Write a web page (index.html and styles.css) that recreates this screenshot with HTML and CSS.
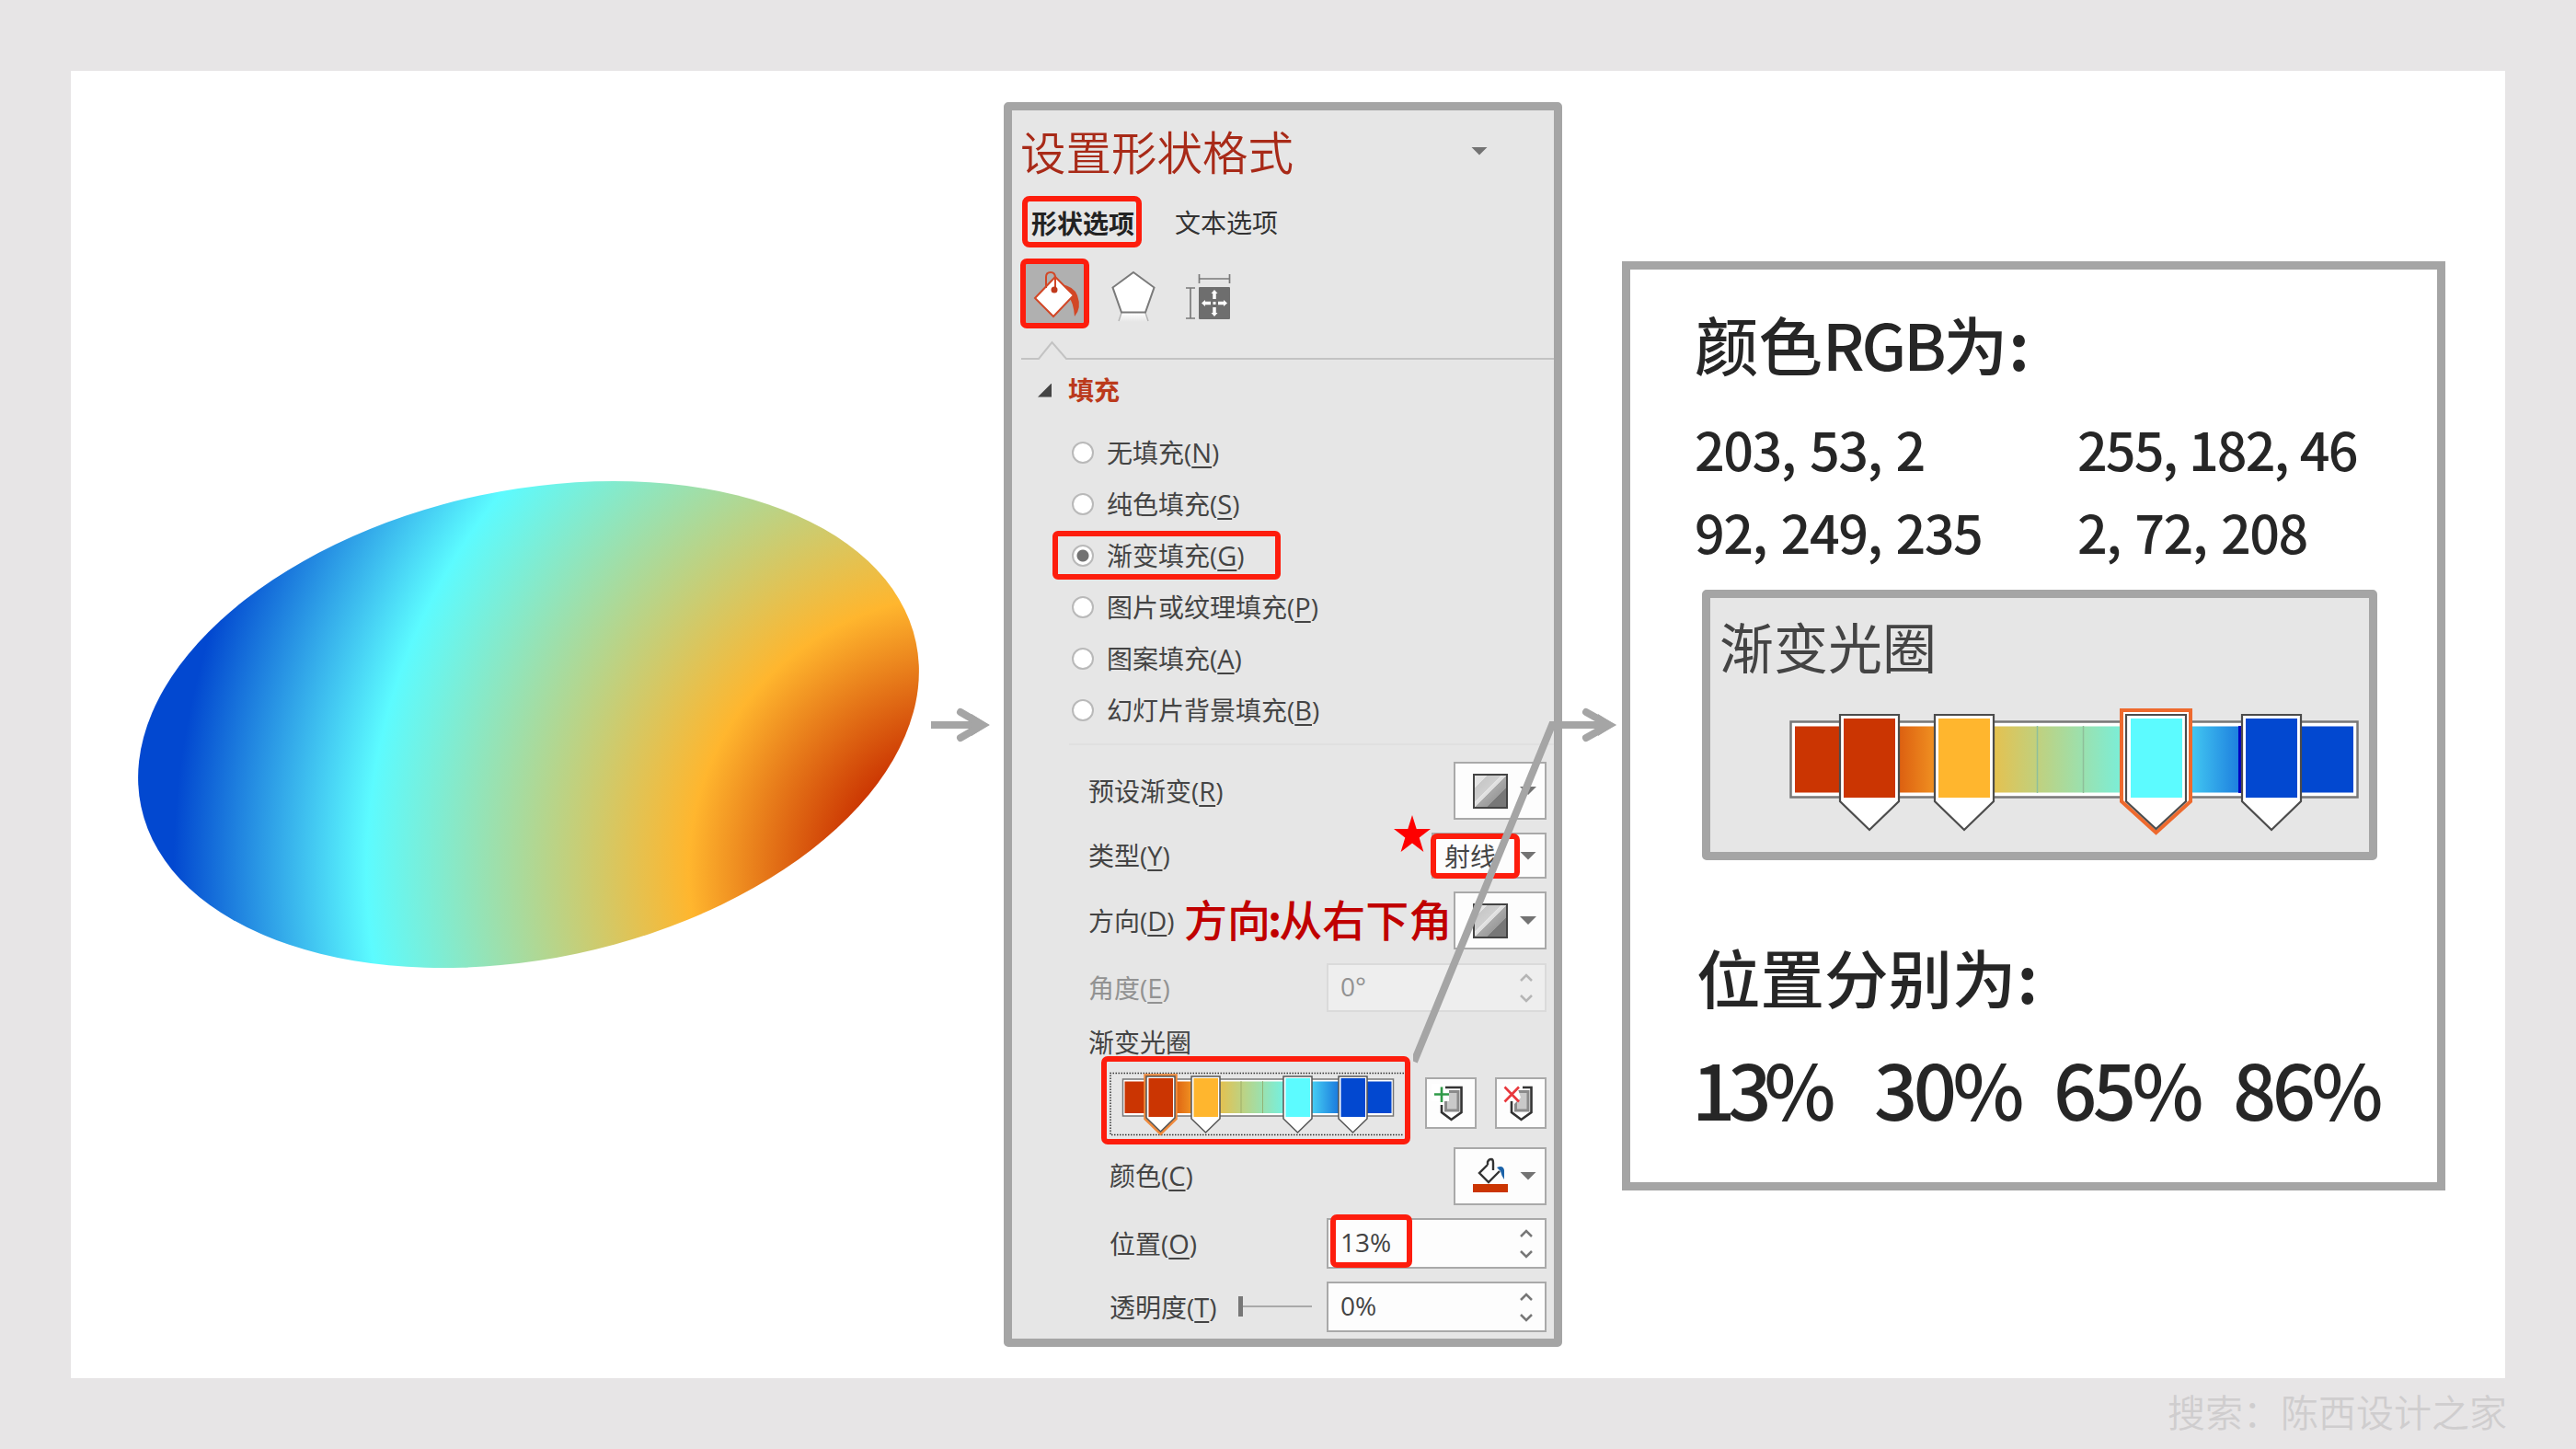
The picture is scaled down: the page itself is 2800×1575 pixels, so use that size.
FILE: index.html
```html
<!DOCTYPE html>
<html lang="zh-CN">
<head>
    <meta charset="UTF-8">
    <meta name="viewport" content="width=device-width, initial-scale=1.0">
    <title>设置形状格式</title>
    <link rel="stylesheet" href="styles.css">
</head>
<body>
    <main class="slide">
        <div class="blob"></div>

        <svg class="arrow" width="68" height="44" viewBox="0 0 68 44">
            <path d="M0 22H54" stroke="#a5a5a5" stroke-width="8"/>
            <path d="M32 8L56 22L32 36" fill="none" stroke="#a5a5a5" stroke-width="8" stroke-linecap="round"/>
            <path d="M44 10L63 22L44 34Z" fill="#a5a5a5"/>
        </svg>

        <!-- Панель формата фигуры -->
        <section class="panel">
            <header class="panel-title">
                <h1>设置形状格式</h1>
                <i class="caret"></i>
            </header>

            <nav class="tabs">
                <span class="tab active">形状选项</span>
                <span class="tab">文本选项</span>
            </nav>

            <div class="tools">
                <div class="tool-active">
                    <svg width="63" height="64" viewBox="0 0 63 64">
                        <path d="M38 22Q52 24 56 34Q61 48 53 57Q52 42 46 34Z" fill="#d24726"/>
                        <path d="M10 37L32 14L52 34L30 57Z" fill="#fff" stroke="#d24726" stroke-width="2"/>
                        <path d="M22 26V14Q22 9 27 9Q32 9 32 15V27" fill="none" stroke="#d24726" stroke-width="2"/>
                        <circle cx="31" cy="28" r="3.5" fill="#c0391c"/>
                    </svg>
                </div>
                <svg class="tool-shape" width="48" height="60" viewBox="0 0 48 60">
                    <defs>
                        <linearGradient id="mirror" x1="0" y1="0" x2="0" y2="1">
                            <stop offset="0" stop-color="#fff"/>
                            <stop offset="1" stop-color="#e6e6e6"/>
                        </linearGradient>
                    </defs>
                    <path d="M11 47H37L40 57H8Z" fill="url(#mirror)"/>
                    <path d="M11 47L8 56M37 47L40 56" stroke="#b5b5b5" stroke-width="1.5"/>
                    <path d="M24 3L46.500 19.500L37 46.500H11L1.500 19.500Z" fill="#fff" stroke="#7a7a7a" stroke-width="2"/>
                </svg>
                <svg class="tool-size" width="50" height="52" viewBox="0 0 50 52">
                    <rect x="15" y="16" width="34" height="35" rx="1" fill="#6e6e6e"/>
                    <path d="M15.500 7H48.500M15.500 2V12M48.500 2V12M6 17V50M1 17H11M1 50H11" fill="none" stroke="#7a7a7a" stroke-width="1.700"/>
                    <path d="M32 22V29M32 38V45M21 33.500H28M36 33.500H43" stroke="#fff" stroke-width="3.500"/>
                    <path d="M28.500 23L32 19L35.500 23ZM28.500 44L32 48L35.500 44ZM22 30L18 33.500L22 37ZM42 30L46 33.500L42 37Z" fill="#fff"/>
                    <rect x="30.500" y="32" width="3" height="3" fill="#fff"/>
                </svg>
            </div>

            <svg class="divider" width="579" height="24" viewBox="0 0 579 24">
                <path d="M0 21H19L33.500 3L49 21H579" fill="none" stroke="#c3c3c3" stroke-width="2"/>
            </svg>

            <h2 class="group"><i class="corner"></i>填充</h2>

            <ul class="radios">
                <li><i></i>无填充(<u>N</u>)</li>
                <li><i></i>纯色填充(<u>S</u>)</li>
                <li class="checked"><i></i>渐变填充(<u>G</u>)</li>
                <li><i></i>图片或纹理填充(<u>P</u>)</li>
                <li><i></i>图案填充(<u>A</u>)</li>
                <li><i></i>幻灯片背景填充(<u>B</u>)</li>
            </ul>

            <div class="fields">
                <div class="field tall">
                    <label>预设渐变(<u>R</u>)</label>
                    <div class="drop"><i class="swatch"></i><i class="caret"></i></div>
                </div>
                <div class="field type">
                    <label>类型(<u>Y</u>)</label>
                    <div class="combo">
                        <span class="marked">射线</span><i class="caret"></i>
                        <svg class="star" width="40" height="40" viewBox="0 0 40 40">
                            <path d="M20 0L24.700 15H40L27.700 24.500L32.400 40L20 30.500L7.600 40L12.300 24.500L0 15H15.300Z" fill="#fe0000"/>
                        </svg>
                    </div>
                </div>
                <div class="field tall">
                    <label>方向(<u>D</u>)</label>
                    <strong class="note">方向<b>:</b>从右下角</strong>
                    <div class="drop"><i class="swatch"></i><i class="caret"></i></div>
                </div>
                <div class="field angle">
                    <label>角度(<u>E</u>)</label>
                    <div class="spin"><span>0°</span>
                        <svg width="18" height="36" viewBox="0 0 18 36"><path d="M3 10L9 4L15 10M3 26L9 32L15 26"/></svg>
                    </div>
                </div>
                <div class="stops-label">渐变光圈</div>
                <div class="stops">
                    <div class="stops-bar">
                        <svg width="323" height="84" viewBox="0 0 323 84">
                            <defs>
                                <linearGradient id="ramp" x1="0" y1="0" x2="1" y2="0">
                                    <stop offset="13%" stop-color="#cb3502"/>
                                    <stop offset="30%" stop-color="#ffb62e"/>
                                    <stop offset="65%" stop-color="#5cfbff"/>
                                    <stop offset="86%" stop-color="#0248d0"/>
                                </linearGradient>
                            </defs>
                            <path d="M323 12.500H4V79.500H323" fill="none" stroke="#333" stroke-width="1.500" stroke-dasharray="1.500 1.500"/>
                            <rect x="17.500" y="19" width="294" height="40" fill="#fff" stroke="#777" stroke-width="1.500"/>
                            <rect x="19.500" y="21.500" width="290" height="34.500" fill="url(#ramp)"/>
                            <path d="M146 21V56M169.500 21V56" stroke="#8fa060" stroke-opacity="0.7" stroke-width="1"/>
                            <g stroke="#555" stroke-width="1.500" fill="#fff">
                                <path d="M42 15H75V62L58.500 78L42 62Z" stroke="#f08a3c" stroke-width="3.500"/>
                                <path d="M43 16H74V61L58.500 76L43 61Z"/>
                                <path d="M92 16H123V62L107.500 77L92 62Z"/>
                                <path d="M192 16H223V62L207.500 77L192 62Z"/>
                                <path d="M252 16H283V62L267.500 77L252 62Z"/>
                            </g>
                            <path d="M45.500 18H72V60H45.500Z" fill="#cb3502"/>
                            <path d="M94.500 18H121V60H94.500Z" fill="#ffb62e"/>
                            <path d="M194.500 18H221V60H194.500Z" fill="#5cfbff"/>
                            <path d="M254.500 18H281V60H254.500Z" fill="#0248d0"/>
                        </svg>
                    </div>
                    <div class="stop-btn">
                        <svg width="52" height="52" viewBox="0 0 52 52">
                            <path d="M20.500 13.500H34V34H20.500Z" fill="#c9c9c9" stroke="#8a8a8a" stroke-width="3"/>
                            <path d="M5 5H24V24H5Z" fill="#fff"/>
                            <path d="M20 9H37.500V36L26.500 44L16 36V28" fill="none" stroke="#333" stroke-width="2.600"/>
                            <path d="M8 16.500H24M16 8.500V25" stroke="#2f9a48" stroke-width="2.600"/>
                        </svg>
                    </div>
                    <div class="stop-btn">
                        <svg width="52" height="52" viewBox="0 0 52 52">
                            <path d="M20.500 13.500H34V34H20.500Z" fill="#c9c9c9" stroke="#8a8a8a" stroke-width="3"/>
                            <path d="M5 5H21L26 20L19 27H5Z" fill="#fff"/>
                            <path d="M28 9H37.500V36L26.500 44L16 36V24" fill="none" stroke="#333" stroke-width="2.600"/>
                            <path d="M8.500 8.500L24 24.500M24 8.500L8.500 24.500" stroke="#e8383d" stroke-width="2.600"/>
                        </svg>
                    </div>
                </div>
                <div class="field sub color">
                    <label>颜色(<u>C</u>)</label>
                    <div class="drop">
                        <svg class="fill-icon" width="38" height="40" viewBox="0 0 38 40">
                            <path d="M26 11Q33 8 34 14V24Q31 20 30 15Z" fill="#1b62a8"/>
                            <path d="M16 8L7 17L17 27L29 15M16 8V5Q17 2 20 2Q22 2 22 6V14" fill="none" stroke="#333" stroke-width="2.400"/>
                            <path d="M0 29H38V38H0Z" fill="#cb3502"/>
                        </svg>
                        <i class="caret"></i>
                    </div>
                </div>
                <div class="field sub">
                    <label>位置(<u>O</u>)</label>
                    <div class="spin marked-value"><span>13%</span>
                        <svg width="18" height="36" viewBox="0 0 18 36"><path d="M3 10L9 4L15 10M3 26L9 32L15 26"/></svg>
                    </div>
                </div>
                <div class="field sub">
                    <label>透明度(<u>T</u>)</label>
                    <div class="slider"></div>
                    <div class="spin"><span>0%</span>
                        <svg width="18" height="36" viewBox="0 0 18 36"><path d="M3 10L9 4L15 10M3 26L9 32L15 26"/></svg>
                    </div>
                </div>
            </div>
        </section>

        <!-- Значения градиента -->
        <section class="card">
            <h2>颜色<span class="latin">RGB</span>为<span class="colon">:</span></h2>
            <div class="rgb">
                <span>203, 53, 2</span>
                <span class="tight">255, 182, 46</span>
                <span>92, 249, 235</span>
                <span>2, 72, 208</span>
            </div>
            <div class="preview">
                <svg width="715" height="275" viewBox="0 0 715 275">
                    <text x="10" y="77" class="preview-text">渐变光圈</text>
                    <rect x="87.500" y="134.500" width="616" height="82" fill="#fff" stroke="#777" stroke-width="2.500"/>
                    <rect x="92" y="139.500" width="607" height="72" fill="url(#ramp)"/>
                    <path d="M355.500 139V212M405.500 139V212" stroke="#8fbf9a" stroke-width="1.500"/>
                    <path d="M576 139V212" stroke="#0000c0" stroke-width="4"/>
                    <g stroke="#4c4c4c" stroke-width="2.200" fill="#fff">
                        <path d="M141 127H205V221L173 252L141 221Z"/>
                        <path d="M244 127H308V221L276 252L244 221Z"/>
                        <path d="M447 122H522V221L484.500 255L447 221Z" stroke="#ee6a2e" stroke-width="4"/>
                        <path d="M452 127H517V221L484.500 251L452 221Z"/>
                        <path d="M578 127H642V221L610 252L578 221Z"/>
                    </g>
                    <path d="M145 131H201V217H145Z" fill="#cb3502"/>
                    <path d="M248 131H304V217H248Z" fill="#ffb62e"/>
                    <path d="M457 131H513V217H457Z" fill="#5cfbff"/>
                    <path d="M582 131H638V217H582Z" fill="#0248d0"/>
                </svg>
            </div>
            <h2 class="second">位置分别为<span class="colon">:</span></h2>
            <div class="percents">
                <span class="tight">13%</span><span>30%</span><span>65%</span><span>86%</span>
            </div>
        </section>

        <!-- Линия от шкалы к карточке -->
        <svg class="connector" width="230" height="390" viewBox="0 0 230 390">
            <path d="M1 387L151 21H212" fill="none" stroke="#a5a5a5" stroke-width="8"/>
            <path d="M188 7L213 21L188 35" fill="none" stroke="#a5a5a5" stroke-width="8" stroke-linecap="round"/>
            <path d="M201 9L220 21L201 33Z" fill="#a5a5a5"/>
        </svg>
    </main>
    <footer class="watermark">搜索：陈西设计之家</footer>
</body>
</html>
```
FILE: styles.css
```css
*,
*::before,
*::after {
    margin: 0;
    padding: 0;
    box-sizing: border-box;
}

body {
    width: 2800px;
    height: 1575px;
    padding: 77px;
    overflow: hidden;
    background: #e7e5e6;
    font-family: 'Open Sans', 'Noto Sans CJK SC', sans-serif;
    color: #444;
}

.slide {
    position: relative;
    display: flex;
    align-items: center;
    width: 2646px;
    height: 1421px;
    padding-left: 67px;
    background: #fff;
}

.slide svg {
    display: block;
    flex: none;
}

.blob {
    flex: none;
    width: 861px;
    height: 509px;
    border-radius: 50%;
    background: radial-gradient(circle at 100% 100%, #cb3502 13%, #ffb62e 30%, #5cfbff 65%, #0248d0 86%);
    transform: rotate(-12deg);
}

.arrow {
    margin-left: 7px;
}

.panel {
    flex: none;
    width: 607px;
    height: 1353px;
    margin-left: 11px;
    border: 9px solid #a5a5a5;
    border-radius: 5px;
    background: #e6e6e6;
    font-size: 28px;
    line-height: 34px;
}

.panel-title {
    display: flex;
    align-items: center;
    justify-content: space-between;
    height: 88px;
    padding: 0 72px 0 9px;
}

.panel-title h1 {
    font-family: 'Noto Sans CJK SC', sans-serif;
    font-size: 49.500px;
    line-height: 60px;
    font-weight: 350;
    color: #a82a18;
}

.caret {
    display: block;
    width: 18px;
    height: 9px;
    background: #737373;
    clip-path: polygon(0 0, 100% 0, 50% 100%);
}

.tabs {
    display: flex;
    align-items: center;
    gap: 36px;
    height: 56px;
    margin: 5px 0 0 11px;
    padding-top: 2px;
    color: #333;
}

.tab.active {
    width: 130px;
    height: 56px;
    margin-top: -2px;
    padding: 7px 0 0 4px;
    border: 6px solid #fd1d0d;
    border-radius: 8px;
    font-weight: 700;
    color: #222;
    white-space: nowrap;
}

.tools {
    display: flex;
    height: 76px;
    margin: 12px 0 0 9px;
}

.tool-active {
    width: 75px;
    height: 76px;
    border: 6px solid #fd1d0d;
    border-radius: 7px;
    background: #b0b0b0;
}

.tool-shape {
    margin: 12px 0 0 24px;
}

.tool-size {
    margin: 15px 0 0 32px;
}

.divider {
    margin: 12px 0 0 10px;
}

.group {
    display: flex;
    align-items: center;
    gap: 18px;
    height: 40px;
    margin: 11px 0 0 28px;
    font-size: 28px;
    color: #bb3a1c;
}

.corner {
    width: 15px;
    height: 15px;
    background: #444;
    clip-path: polygon(100% 0, 100% 100%, 0 100%);
}

.radios {
    list-style: none;
    padding: 20px 0 8px 65px;
}

.radios li {
    position: relative;
    display: flex;
    align-items: center;
    height: 56px;
}

.radios i {
    width: 24px;
    height: 24px;
    margin-right: 14px;
    border: 2px solid #b9b9b9;
    border-radius: 50%;
    background: #fff;
}

.radios .checked i {
    background: radial-gradient(circle, #737373 6px, #fff 7px);
}

.radios .checked::after {
    content: '';
    position: absolute;
    left: -21px;
    top: 1px;
    width: 248px;
    height: 53px;
    border: 6px solid #fd1d0d;
    border-radius: 6px;
}

u {
    font-size: 29px;
    text-decoration-thickness: 2px;
    text-underline-offset: 4px;
}

.fields {
    margin-left: 62px;
    padding: 18px 8px 0 21px;
    border-top: 2px solid #e0e0e0;
}

.field {
    position: relative;
    display: flex;
    align-items: center;
    justify-content: space-between;
    height: 55px;
    margin-top: 14px;
}

.field.tall {
    height: 63px;
}

.fields .field:first-child {
    margin-top: 0;
}

.field.type {
    height: 50px;
}

.field.angle {
    height: 53px;
    margin-top: 15px;
}

.field.angle label,
.field.angle span {
    color: #929292;
}

.field.sub {
    padding-left: 23px;
}

.field.color {
    height: 64px;
    margin-top: 2px;
}

.drop {
    display: flex;
    align-items: center;
    justify-content: space-between;
    width: 101px;
    height: 63px;
    padding: 0 9px 0 19px;
    border: 2px solid #a9a9a9;
    background: #fdfdfd;
}

.swatch {
    width: 38px;
    height: 38px;
    border: 2px solid #444;
    background: linear-gradient(135deg, #e4e4e4 20%, #c8c8c8 20%, #cfcfcf 42%, #e6e6e6 42%, #dcdcdc 50%, #a9a9a9 50%, #9b9b9b 70%, #777 70%);
}

.combo {
    position: relative;
    display: flex;
    align-items: center;
    justify-content: space-between;
    width: 125px;
    height: 50px;
    padding-right: 9px;
    border: 2px solid #a9a9a9;
    background: #fdfdfd;
}

.marked {
    width: 97px;
    height: 49px;
    margin-left: -3px;
    padding: 2px 0 0 9px;
    border: 6px solid #fd1d0d;
    border-radius: 7px;
}

.star {
    position: absolute;
    left: -43px;
    top: -21px;
}

.note {
    position: absolute;
    left: 104px;
    top: -6px;
    font-size: 47px;
    line-height: 70px;
    font-family: 'Noto Sans CJK SC', sans-serif;
    font-weight: 500;
    color: #c00000;
    white-space: nowrap;
}

.note b {
    font-weight: 700;
    margin: 0 -3px;
}

.spin {
    position: relative;
    display: flex;
    align-items: center;
    justify-content: space-between;
    width: 239px;
    height: 55px;
    padding: 0 11px 4px 13px;
    border: 2px solid #a9a9a9;
    background: #fdfdfd;
    font-size: 28px;
}

.spin svg {
    margin-top: 4px;
}

.spin path {
    fill: none;
    stroke: #777;
    stroke-width: 2.500;
}

.angle .spin {
    height: 53px;
    border-color: #dadada;
    background: #eee;
}

.angle .spin path {
    stroke: #b5b5b5;
}

.marked-value::before {
    content: '';
    position: absolute;
    left: 2px;
    top: -6px;
    width: 89px;
    height: 58px;
    border: 6px solid #fd1d0d;
    border-radius: 7px;
}

.stops-label {
    height: 30px;
    margin-top: 17px;
    line-height: 32px;
}

.stops {
    display: flex;
    align-items: center;
    justify-content: space-between;
    height: 96px;
    margin-top: 1px;
    margin-left: 14px;
}

.stops-bar {
    width: 336px;
    height: 96px;
    margin-right: -4px;
    border: 6px solid #fd1d0d;
    border-radius: 7px;
}

.stop-btn {
    width: 56px;
    height: 56px;
    margin-top: 5px;
    border: 2px solid #a9a9a9;
    background: #fdfdfd;
}

.slider {
    position: relative;
    width: 80px;
    height: 2px;
    margin: -2px -8px 0 0;
    background: #a9a9a9;
}

.slider::before {
    content: '';
    position: absolute;
    left: 0;
    top: -10px;
    width: 5px;
    height: 22px;
    background: #777;
}

.card {
    flex: none;
    width: 895px;
    height: 1010px;
    margin: 3px 0 0 65px;
    padding: 35px 0 0 70px;
    border: 9px solid #a5a5a5;
    font-family: 'Noto Sans CJK SC', sans-serif;
    color: #262626;
}

.card h2 {
    height: 90px;
    font-size: 69.500px;
    line-height: 90px;
    font-weight: 500;
    white-space: nowrap;
}

.latin {
    letter-spacing: -3px;
}

.colon {
    font-weight: 700;
    margin-left: 1px;
}

.rgb {
    display: grid;
    grid-template-columns: 416px 1fr;
    margin-top: 24px;
    font-size: 57.500px;
    font-weight: 500;
    line-height: 90px;
    letter-spacing: -1.500px;
    word-spacing: 4px;
}

.rgb .tight {
    letter-spacing: -1.900px;
    word-spacing: 2px;
}

.preview {
    width: 734px;
    height: 294px;
    margin: 19px 0 0 8px;
    border: 9px solid #a5a5a5;
    border-radius: 5px;
    background: #e6e6e6;
}

.preview-text {
    font-size: 59px;
    fill: #444;
}

.card .second {
    margin-top: 81px;
    padding-left: 2px;
}

.percents {
    display: grid;
    grid-template-columns: repeat(4, 195px);
    margin-top: 26px;
    font-size: 83px;
    font-weight: 500;
    line-height: 100px;
    letter-spacing: -4.500px;
}

.percents .tight {
    margin-left: -3px;
    letter-spacing: -8px;
}

/* соединитель лежит поверх панели */
.connector {
    position: absolute;
    left: 1459px;
    top: 690px;
}

.watermark {
    height: 77px;
    margin-right: -2px;
    font-family: 'Noto Sans CJK SC', sans-serif;
    font-size: 41px;
    font-weight: 350;
    line-height: 70px;
    text-align: right;
    color: #cfcdce;
}
```
